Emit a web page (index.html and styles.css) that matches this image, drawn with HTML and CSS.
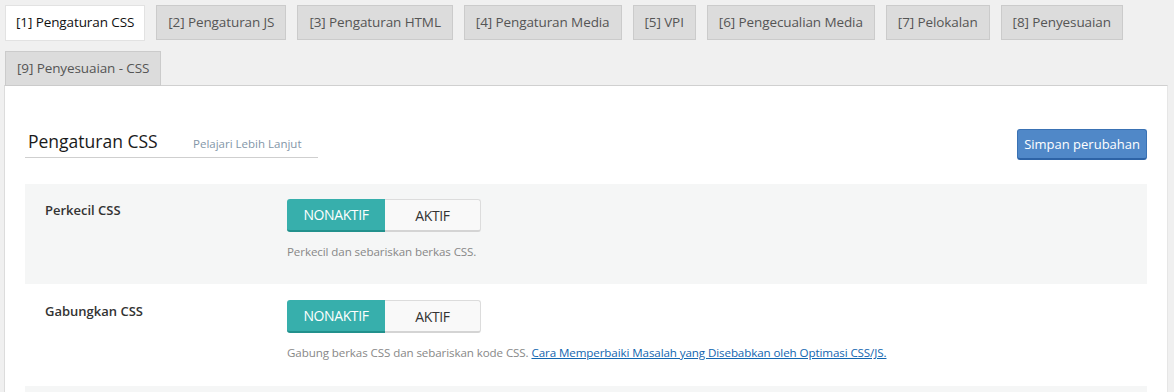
FILE: index.html
```html
<!DOCTYPE html>
<html lang="id">
<head>
  <meta charset="UTF-8">
  <title>Pengaturan CSS</title>
  <link rel="stylesheet" href="styles.css">
</head>
<body>
  <nav class="tabs">
    <a class="tab active" href="#">[1] Pengaturan CSS</a>
    <a class="tab" href="#">[2] Pengaturan JS</a>
    <a class="tab" href="#">[3] Pengaturan HTML</a>
    <a class="tab" href="#">[4] Pengaturan Media</a>
    <a class="tab" href="#">[5] VPI</a>
    <a class="tab" href="#">[6] Pengecualian Media</a>
    <a class="tab" href="#">[7] Pelokalan</a>
    <a class="tab" href="#">[8] Penyesuaian</a>
    <a class="tab" href="#">[9] Penyesuaian - CSS</a>
  </nav>

  <div class="panel">
    <div class="panel-head">
      <div class="title">
        <h2>Pengaturan CSS</h2>
        <a class="learn" href="#">Pelajari Lebih Lanjut</a>
      </div>
      <button class="save">Simpan perubahan</button>
    </div>

    <div class="row shaded">
      <div class="label">Perkecil CSS</div>
      <div class="field">
        <div class="switch">
          <span class="opt on">NONAKTIF</span>
          <span class="opt">AKTIF</span>
        </div>
        <p class="desc">Perkecil dan sebariskan berkas CSS.</p>
      </div>
    </div>

    <div class="row">
      <div class="label">Gabungkan CSS</div>
      <div class="field">
        <div class="switch">
          <span class="opt on">NONAKTIF</span>
          <span class="opt">AKTIF</span>
        </div>
        <p class="desc">Gabung berkas CSS dan sebariskan kode CSS. <a href="#">Cara Memperbaiki Masalah yang Disebabkan oleh Optimasi CSS/JS.</a></p>
      </div>
    </div>

    <div class="row shaded"></div>
  </div>
</body>
</html>
```

FILE: styles.css
```css
body {
  margin: 0;
  background: #f0f0f0;
  font-family: 'Open Sans', 'Noto Sans', sans-serif;
  color: #333;
  font-size: 13px;
  overflow: hidden;
}

.tabs {
  display: flex;
  flex-wrap: wrap;
  gap: 10px 11px;
  padding: 5px 0 0 5px;
}
.tab {
  display: block;
  height: 33px;
  line-height: 33px;
  padding: 0 11px;
  border: 1px solid #cbcbcb;
  background: #dcdcdc;
  color: #555;
  font-size: 13.5px;
  text-decoration: none;
  letter-spacing: -0.1px;
}
.tab.active {
  padding: 0 10px;
  background: #fff;
  color: #111;
  border-color: #e2e2e2;
  height: 34px;
}
.tab:last-child {
  margin-bottom: -1px;
}

.panel {
  margin-left: 4px;
  width: 1122px;
  background: #fff;
  border-left: 1px solid #dcdcdc;
  border-top: 1px solid #d0d0d0;
  border-right: 1px solid #e6e6e6;
  padding: 0 20px;
  min-height: 320px;
}

.panel-head {
  display: flex;
  justify-content: space-between;
  align-items: flex-end;
  padding-top: 43px;
  margin-bottom: 26px;
}
.title {
  display: flex;
  align-items: baseline;
  width: 290px;
  padding: 0 0 4px 3px;
  border-bottom: 1px solid #cfcfcf;
}
.title h2 {
  margin: 0;
  font-size: 17.5px;
  font-weight: 500;
  color: #1a1a1a;
  line-height: 24px;
  width: 165px;
}
.learn {
  font-size: 11.5px;
  color: #8396a8;
  text-decoration: none;
}
.save {
  height: 31px;
  padding: 0 6px;
  margin-bottom: -2px;
  background: #5088c8;
  border: 1px solid #3a72b4;
  border-bottom: 2px solid #2d63a6;
  border-radius: 3px;
  color: #fff;
  font-family: inherit;
  font-size: 13px;
}

.row {
  display: flex;
  height: 100px;
  box-sizing: border-box;
  padding: 15px 0 0 20px;
  margin-bottom: 1px;
}
.row.shaded {
  background: #f5f6f6;
}
.label {
  width: 242px;
  font-weight: 600;
  font-size: 13px;
  color: #333;
  line-height: 22px;
}
.switch {
  display: flex;
  width: 194px;
  height: 33px;
  box-sizing: border-box;
}
.opt {
  flex: 1;
  display: flex;
  align-items: center;
  justify-content: center;
  font-size: 14px;
  color: #333;
  background: #f9f9f9;
  border: 1px solid #dcdcdc;
  border-left: none;
  border-bottom: 2px solid #d4d4d4;
  border-radius: 0 3px 3px 0;
  letter-spacing: -0.4px;
}
.opt.on {
  flex: 0 0 98px;
  background: #37afac;
  color: #fff;
  border: none;
  border-bottom: 2px solid #22918d;
  border-radius: 3px 0 0 3px;
}
.desc {
  margin: 12px 0 0;
  font-size: 11.6px;
  color: #888;
  letter-spacing: -0.1px;
}
.desc a {
  color: #1266b0;
}
```
